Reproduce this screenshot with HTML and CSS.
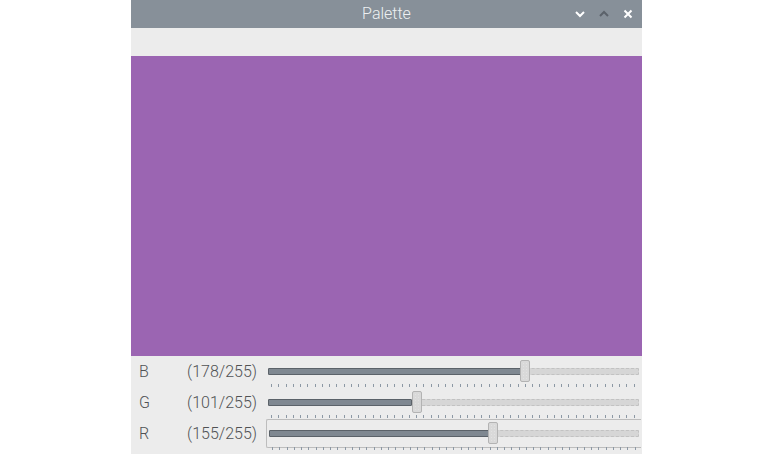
FILE: index.html
```html
<!DOCTYPE html>
<html>
<head>
<meta charset="utf-8">
<link rel="stylesheet" href="styles.css">
</head>
<body>
<div class="window">
  <div class="titlebar">
    <div></div>
    <div class="title">Palette</div>
    <div class="controls">
      <svg class="btn" width="16" height="16" viewBox="0 0 16 16"><polyline points="4,6 8,10 12,6" fill="none" stroke="#ffffff" stroke-width="2"/></svg>
      <svg class="btn" width="16" height="16" viewBox="0 0 16 16"><polyline points="4,10 8,6 12,10" fill="none" stroke="#5b626a" stroke-width="2"/></svg>
      <svg class="btn" width="16" height="16" viewBox="0 0 16 16"><path d="M4.5 4.5 L11.5 11.5 M11.5 4.5 L4.5 11.5" fill="none" stroke="#ffffff" stroke-width="2"/></svg>
    </div>
  </div>
  <div class="toolbar"></div>
  <div class="swatch"></div>
  <div class="sliders">
    <div class="row">
      <span class="label">B</span>
      <span class="value">(178/255)</span>
      <div class="scale">
        <div class="trough"><div class="fill" style="width:253px"></div></div>
        <div class="handle" style="left:253px"></div>
        <div class="ticks"></div>
      </div>
    </div>
    <div class="row">
      <span class="label">G</span>
      <span class="value">(101/255)</span>
      <div class="scale">
        <div class="trough"><div class="fill" style="width:144px"></div></div>
        <div class="handle" style="left:145px"></div>
        <div class="ticks"></div>
      </div>
    </div>
    <div class="row">
      <span class="label">R</span>
      <span class="value">(155/255)</span>
      <div class="scale focused">
        <div class="trough"><div class="fill" style="width:221px"></div></div>
        <div class="handle" style="left:221px"></div>
        <div class="ticks"></div>
      </div>
    </div>
  </div>
</div>
</body>
</html>
```

FILE: styles.css
```css
html, body {
  margin: 0;
  padding: 0;
  background: #ffffff;
  font-family: Roboto, "Liberation Sans", sans-serif;
}
.window {
  margin-left: 131px;
  width: 511px;
  height: 454px;
  overflow: hidden;
  background: #ececec;
}
.titlebar {
  height: 28px;
  background: #879099;
  display: grid;
  grid-template-columns: 1fr auto 1fr;
  align-items: center;
}
.title {
  color: #eef0f2;
  font-size: 16px;
  font-weight: 300;
  line-height: 28px;
}
.controls {
  display: flex;
  justify-content: flex-end;
  align-items: center;
  gap: 8px;
  padding-right: 6px;
}
.btn { display: block; }
.toolbar {
  height: 28px;
  background: #ececec;
}
.swatch {
  height: 300px;
  background: #9b65b2;
}
.sliders {
  padding-top: 2px;
}
.row {
  height: 31px;
  display: flex;
  align-items: flex-start;
  padding-left: 8px;
  color: #505254;
  font-size: 16px;
  font-weight: 300;
}
.label {
  width: 40px;
  line-height: 27px;
}
.value {
  width: 78px;
  text-align: right;
  line-height: 27px;
}
.scale {
  position: relative;
  margin-left: 9px;
  width: 375px;
  height: 31px;
  box-sizing: border-box;
  border: 1px solid transparent;
  border-right: none;
}
.scale.focused {
  border-color: #bdbdbd;
  height: 29px;
  top: -1px;
  border-radius: 2px 0 0 2px;
}
.trough {
  position: absolute;
  left: 1px;
  top: 9px;
  width: 371px;
  height: 7px;
  box-sizing: border-box;
  background: #d6d6d6;
  border: 1px dashed #c2c2c2;
  border-radius: 1px;
}
.focused .trough { left: 2px; top: 10px; width: 370px; }
.fill {
  position: absolute;
  left: -1px;
  top: -1px;
  height: 7px;
  box-sizing: border-box;
  background: #7f8891;
  border: 1px solid #5b6269;
  border-radius: 1px;
}
.handle {
  position: absolute;
  top: 1px;
  width: 10px;
  height: 22px;
  box-sizing: border-box;
  border: 1px solid #b3b3b3;
  border-radius: 2px;
  background-color: #e2e2e2;
  background-image:
    radial-gradient(circle, #cfcfcf 0.6px, transparent 0.8px),
    radial-gradient(circle, #f2f2f2 0.6px, transparent 0.8px);
  background-size: 2px 2px, 3px 3px;
  background-position: 0 0, 1px 1px;
}
.focused .handle { top: 2px; }
.ticks {
  position: absolute;
  left: 4px;
  top: 25px;
  width: 368px;
  height: 3px;
  background-image: repeating-linear-gradient(to right, #8c98a4 0, #8c98a4 1px, transparent 1px, transparent 7.25px);
}
.focused .ticks { top: 27px; left: 5px; }
```
